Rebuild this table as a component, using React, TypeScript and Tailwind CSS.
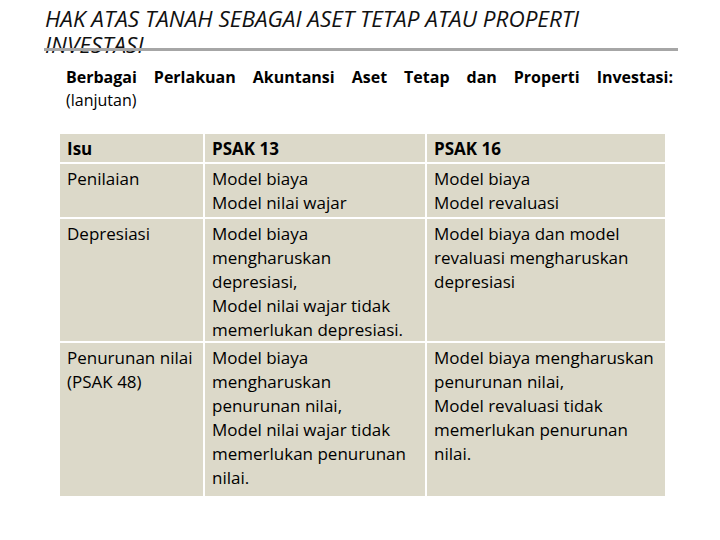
const font = { fontFamily: '"Open Sans", "Liberation Sans", sans-serif' };

const heading = "Berbagai Perlakuan Akuntansi Aset Tetap dan Properti Investasi:".split(" ");

type Row = { issue: string[]; psak13: string[]; psak16: string[]; h: string };

const rows: Row[] = [
  {
    issue: ["Penilaian"],
    psak13: ["Model biaya", "Model nilai wajar"],
    psak16: ["Model biaya", "Model revaluasi"],
    h: "h-[53px]",
  },
  {
    issue: ["Depresiasi"],
    psak13: ["Model biaya", "mengharuskan", "depresiasi,", "Model nilai wajar tidak", "memerlukan depresiasi."],
    psak16: ["Model biaya dan model", "revaluasi mengharuskan", "depresiasi"],
    h: "h-[122px]",
  },
  {
    issue: ["Penurunan nilai", "(PSAK 48)"],
    psak13: ["Model biaya", "mengharuskan", "penurunan nilai,", "Model nilai wajar tidak", "memerlukan penurunan", "nilai."],
    psak16: ["Model biaya mengharuskan", "penurunan nilai,", "Model revaluasi tidak", "memerlukan penurunan", "nilai."],
    h: "h-[153px]",
  },
];

function Cell({ lines, bold, h }: { lines: string[]; bold?: boolean; h: string }) {
  return (
    <div className={`${h} bg-[#dcd9c9] px-[7px] pt-[3px] text-[17px] leading-[24px] text-black ${bold ? "font-bold" : ""} whitespace-nowrap`}>
      {lines.map((l, i) => (
        <div key={i}>{l}</div>
      ))}
    </div>
  );
}

export default function App() {
  return (
    <div className="w-[720px] h-[540px] bg-white relative overflow-hidden" style={font}>
      {/* title */}
      <div className="pl-[45px] pt-[6px] h-[48px] text-[22.5px] leading-[26px] italic text-[#111] whitespace-nowrap">
        <div>HAK ATAS TANAH SEBAGAI ASET TETAP ATAU PROPERTI</div>
        <div>INVESTASI</div>
      </div>
      <div className="relative ml-[44px] w-[634px] h-[3px] bg-[#a6a6a6]" />

      {/* subheading */}
      <div className="ml-[66px] w-[607px] mt-[15px] text-[16px] leading-[23px] text-black">
        <div className="flex justify-between font-bold">
          {heading.map((w) => (
            <span key={w}>{w}</span>
          ))}
        </div>
        <div>(lanjutan)</div>
      </div>

      {/* table */}
      <div className="ml-[60px] mt-[22px] grid grid-cols-[143px_220px_238px] gap-[2px]">
        <Cell lines={["Isu"]} bold h="h-[28px]" />
        <Cell lines={["PSAK 13"]} bold h="h-[28px]" />
        <Cell lines={["PSAK 16"]} bold h="h-[28px]" />
        {rows.map((r) => (
          <>
            <Cell key={r.issue[0] + "a"} lines={r.issue} h={r.h} />
            <Cell key={r.issue[0] + "b"} lines={r.psak13} h={r.h} />
            <Cell key={r.issue[0] + "c"} lines={r.psak16} h={r.h} />
          </>
        ))}
      </div>
    </div>
  );
}
